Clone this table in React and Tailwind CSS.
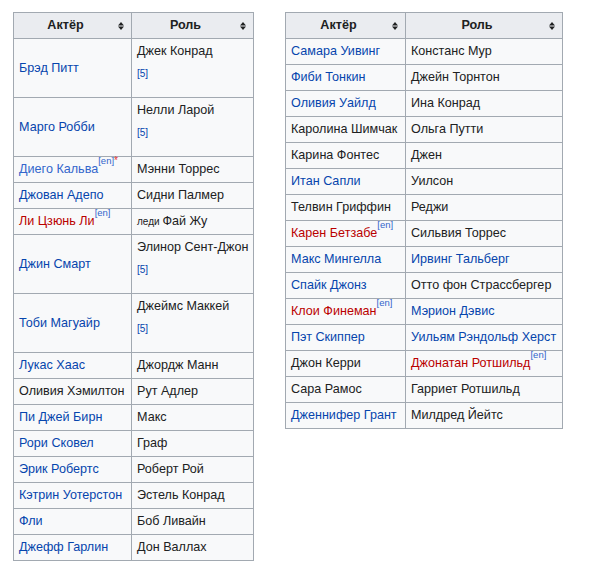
const LINK = 'text-[#0645ad]';
const RED = 'text-[#ba0000]';
const IW = 'text-[#3366cc]';

const leftRows = [
  { actor: 'Брэд Питт', a: LINK, role: 'Джек Конрад', ref: '5' },
  { actor: 'Марго Робби', a: LINK, role: 'Нелли Ларой', ref: '5' },
  { actor: 'Диего Кальва', a: IW, en: true, star: true, role: 'Мэнни Торрес' },
  { actor: 'Джован Адепо', a: LINK, role: 'Сидни Палмер' },
  { actor: 'Ли Цзюнь Ли', a: RED, en: true, role: 'Фай Жу', prefix: 'леди' },
  { actor: 'Джин Смарт', a: LINK, role: 'Элинор Сент-Джон', ref: '5' },
  { actor: 'Тоби Магуайр', a: LINK, role: 'Джеймс Маккей', ref: '5' },
  { actor: 'Лукас Хаас', a: LINK, role: 'Джордж Манн' },
  { actor: 'Оливия Хэмилтон', role: 'Рут Адлер' },
  { actor: 'Пи Джей Бирн', a: LINK, role: 'Макс' },
  { actor: 'Рори Сковел', a: LINK, role: 'Граф' },
  { actor: 'Эрик Робертс', a: LINK, role: 'Роберт Рой' },
  { actor: 'Кэтрин Уотерстон', a: LINK, role: 'Эстель Конрад' },
  { actor: 'Фли', a: LINK, role: 'Боб Ливайн' },
  { actor: 'Джефф Гарлин', a: LINK, role: 'Дон Валлах' },
];

const rightRows = [
  { actor: 'Самара Уивинг', a: LINK, role: 'Констанс Мур' },
  { actor: 'Фиби Тонкин', a: LINK, role: 'Джейн Торнтон' },
  { actor: 'Оливия Уайлд', a: LINK, role: 'Ина Конрад' },
  { actor: 'Каролина Шимчак', role: 'Ольга Путти' },
  { actor: 'Карина Фонтес', role: 'Джен' },
  { actor: 'Итан Сапли', a: LINK, role: 'Уилсон' },
  { actor: 'Телвин Гриффин', role: 'Реджи' },
  { actor: 'Карен Бетзабе', a: RED, en: true, role: 'Сильвия Торрес' },
  { actor: 'Макс Мингелла', a: LINK, role: 'Ирвинг Тальберг', r: LINK },
  { actor: 'Спайк Джонз', a: LINK, role: 'Отто фон Страссбергер' },
  { actor: 'Клои Финеман', a: RED, en: true, role: 'Мэрион Дэвис', r: LINK },
  { actor: 'Пэт Скиппер', a: LINK, role: 'Уильям Рэндольф Херст', r: LINK },
  { actor: 'Джон Керри', role: 'Джонатан Ротшильд', r: RED, ren: true },
  { actor: 'Сара Рамос', role: 'Гарриет Ротшильд' },
  { actor: 'Дженнифер Грант', a: LINK, role: 'Милдред Йейтс' },
];

function SortIcon() {
  return (
    <svg width="6" height="8" viewBox="0 0 6 8" className="absolute right-[7px] top-1/2 -translate-y-1/2">
      <path d="M0 3.5L3 0l3 3.5z M0 4.5L3 8l3-3.5z" fill="#202122" />
    </svg>
  );
}

function En() {
  return <sup className="text-[9.5px] leading-none text-[#3366cc] align-[4px]">[en]</sup>;
}

function CastTable({ rows, width, w1, w2 }) {
  const cell = 'border-r border-b border-[#a2a9b1] px-[5px] p-0';
  return (
    <table className={`${width} border-separate border-spacing-0 border-t border-l border-[#a2a9b1] table-fixed text-[12.6px] text-[#202122] bg-[#f8f9fa]`}>
      <thead>
        <tr>
          <th className={`${cell} ${w1} relative h-[26px] bg-[#eaecf0] font-bold pr-[19px]`}>
            Актёр<SortIcon />
          </th>
          <th className={`${cell} ${w2} relative h-[26px] bg-[#eaecf0] font-bold pr-[19px]`}>
            Роль<SortIcon />
          </th>
        </tr>
      </thead>
      <tbody>
        {rows.map((row) => (
          <tr key={row.actor}>
            <td className={`${cell} ${row.ref ? 'h-[59px]' : 'h-[26px]'} align-middle whitespace-nowrap`}>
              <span className={row.a || ''}>{row.actor}</span>
              {row.en && <En />}
              {row.star && <sup className="text-[10px] leading-none text-[#d33] align-[4px]">*</sup>}
            </td>
            <td className={`${cell} ${row.ref ? 'align-top pt-[2px]' : 'align-middle'} whitespace-nowrap`}>
              {row.ref ? (
                <div>
                  <div className="leading-[20px]">{row.role}</div>
                  <div className="leading-[20px] mt-[3px] text-[10px] text-[#0645ad]">[{row.ref}]</div>
                </div>
              ) : (
                <>
                  {row.prefix && <span className="text-[10px]">{row.prefix} </span>}
                  <span className={row.r || ''}>{row.role}</span>
                  {row.ren && <En />}
                </>
              )}
            </td>
          </tr>
        ))}
      </tbody>
    </table>
  );
}

export default function App() {
  return (
    <div className="min-h-[576px] bg-white pt-[12px] pl-[13px] flex items-start gap-[31px]" style={{ fontFamily: '"Liberation Sans", Arial, sans-serif' }}>
      <CastTable rows={leftRows} width="w-[241px]" w1="w-[118px]" w2="w-[122px]" />
      <CastTable rows={rightRows} width="w-[278px]" w1="w-[120px]" w2="w-[157px]" />
    </div>
  );
}
